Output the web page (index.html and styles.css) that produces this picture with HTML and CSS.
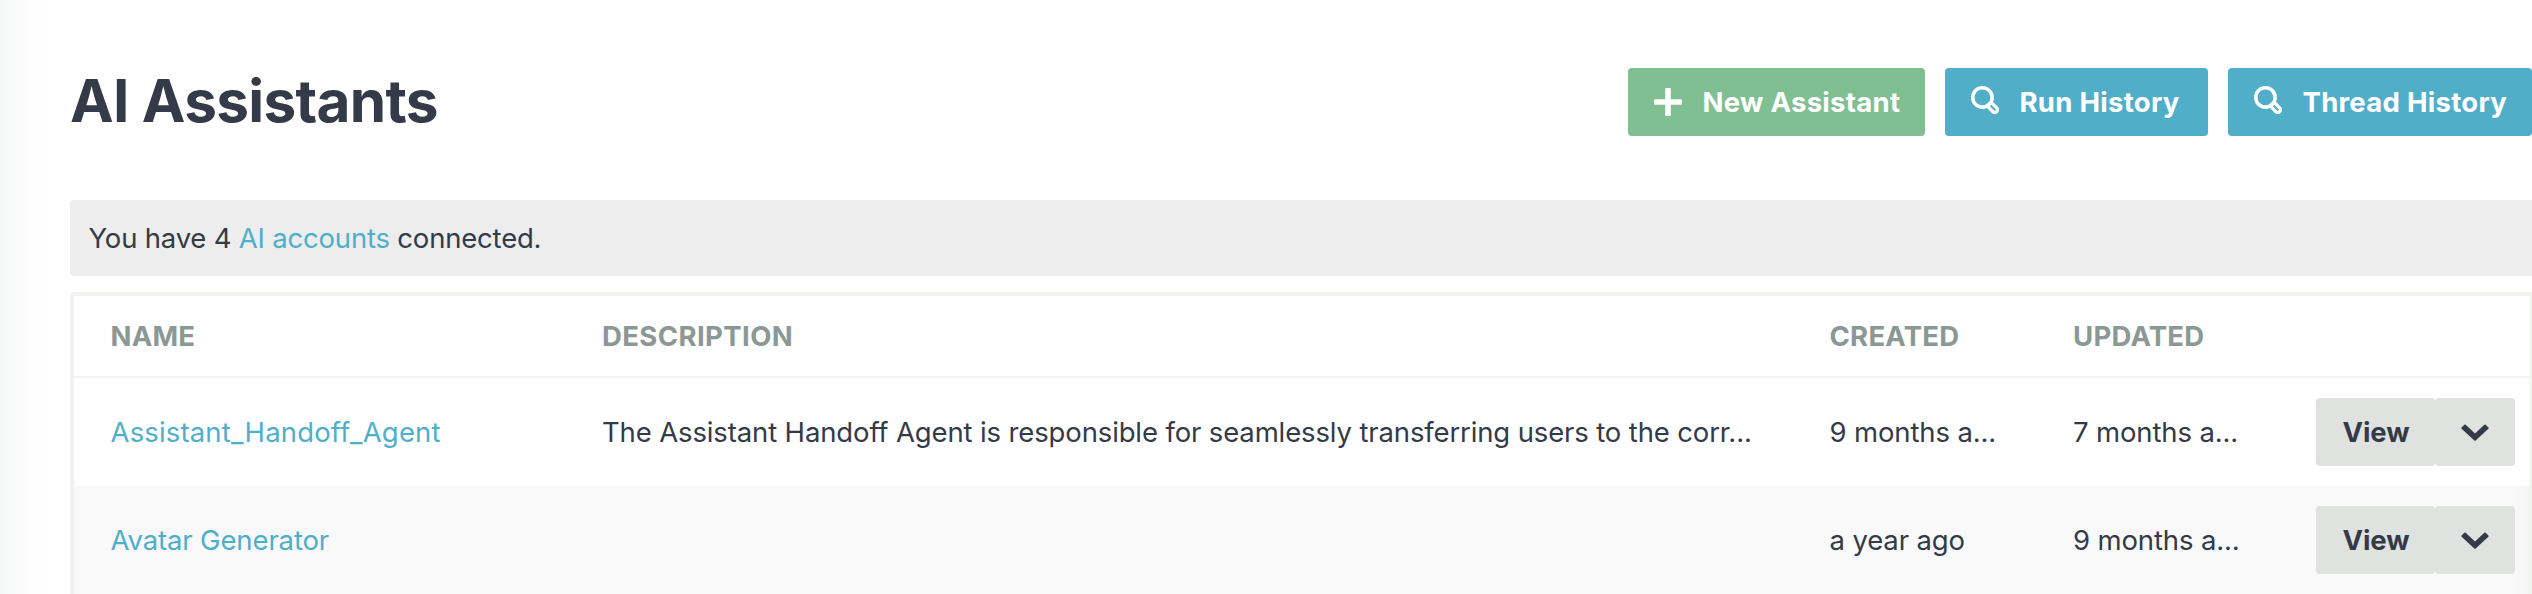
FILE: index.html
```html
<!DOCTYPE html>
<html lang="en">
<head>
<meta charset="utf-8">
<title>AI Assistants</title>
<link rel="stylesheet" href="styles.css">
</head>
<body>
<svg class="sprite" aria-hidden="true">
  <symbol id="plus" viewBox="0 0 28 28"><g fill="currentColor"><rect x="11.2" width="5.6" height="28" rx="1.2"/><rect y="11.2" width="28" height="5.6" rx="1.2"/></g></symbol>
  <symbol id="search" viewBox="0 0 28 28"><g fill="none" stroke="currentColor"><circle cx="11.4" cy="11.4" r="9.7" stroke-width="3.6"/><rect x="25.5" y="-2.7" width="10.7" height="5.4" rx="2.5" transform="rotate(45)" stroke-width="3.3"/></g></symbol>
  <symbol id="chevron" viewBox="0 0 28 17"><path d="M0.6 3.5L3.3 0.7Q4 0.1 4.7 0.7L14 9.5L23.3 0.7Q24 0.1 24.7 0.7L27.4 3.5Q28 4.1 27.4 4.8L14.7 16.6Q14 17.1 13.3 16.6L0.6 4.8Q0 4.1 0.6 3.5Z" fill="currentColor"/></symbol>
</svg>
<main class="page">
  <header class="page-header">
    <h1 class="title"><span>AI Assistants</span></h1>
    <div class="actions">
      <button class="btn btn-green"><svg class="icon icon-plus"><use href="#plus"/></svg><span>New Assistant</span></button>
      <button class="btn btn-blue btn-run"><svg class="icon"><use href="#search"/></svg><span>Run History</span></button>
      <button class="btn btn-blue btn-thread"><svg class="icon"><use href="#search"/></svg><span>Thread History</span></button>
    </div>
  </header>
  <div class="notice"><span>You have 4 <a class="link">AI accounts</a> connected.</span></div>
  <section class="table">
    <div class="row head">
      <span>NAME</span><span class="wide">DESCRIPTION</span><span>CREATED</span><span>UPDATED</span>
    </div>
    <div class="row">
      <a class="link spaced">Assistant_Handoff_Agent</a>
      <span>The Assistant Handoff Agent is responsible for seamlessly transferring users to the corr...</span>
      <span>9 months a...</span><span>7 months a...</span>
      <div class="split"><button class="view">View</button><button class="more" aria-label="More"><svg class="chevron"><use href="#chevron"/></svg></button></div>
    </div>
    <div class="row alt">
      <a class="link">Avatar Generator</a>
      <span></span>
      <span>a year ago</span><span>9 months a...</span>
      <div class="split"><button class="view">View</button><button class="more" aria-label="More"><svg class="chevron"><use href="#chevron"/></svg></button></div>
    </div>
  </section>
</main>
</body>
</html>
```
FILE: styles.css
```css
* { box-sizing: border-box; }
body {
  margin: 0;
  width: 2532px;
  height: 594px;
  overflow: hidden;
  background: linear-gradient(to right, #f6f8f7 0, #fafcfb 16px, #fdfefd 34px, #fff 60px);
  color: #343a47;
  font: 400 27.5px/34px Inter, "Liberation Sans", sans-serif;
  letter-spacing: -0.135px;
  white-space: nowrap;
}
.sprite { display: none; }
.page { padding: 68px 0 0 70px; width: 2534px; }
.page-header { display: flex; justify-content: space-between; height: 132px; padding-right: 2px; }
.title { margin: 0; font-size: 58.5px; line-height: 66px; font-weight: 700; letter-spacing: -0.7px; }
.actions { display: flex; gap: 20px; }
.btn, .view, .more {
  display: flex; align-items: center; height: 68px; margin: 0; border: 0; border-radius: 4px;
  color: #fff; font: 700 27.5px/34px Inter, "Liberation Sans", sans-serif; letter-spacing: 0.28px;
}
.btn { width: 297px; padding: 0 0 0 26px; gap: 20.5px; }
.btn-green { background: #7fbf92; }
.btn-blue { background: #51aec9; }
.btn-run { width: 263px; }
.btn-thread { width: 304px; }
.icon { width: 28px; height: 28px; flex: none; margin-bottom: 4px; }
.icon-plus { margin-bottom: 0; }
.notice { height: 76px; padding: 21px 18.5px; background: #ededed; border-radius: 4px 0 0 4px; letter-spacing: -0.2px; }
.link { color: #4fafc9; }
.spaced { letter-spacing: 0.16px; }
.table { margin-top: 16px; height: 320px; border: 4px solid #f1f3f0; border-radius: 4px; background: #fff; }
.row {
  display: grid; grid-template-columns: 491.5px 1227.5px 243.5px 243px 199px;
  align-items: center; height: 108px; padding-left: 36.5px;
}
.head { height: 82px; border-bottom: 2px solid #f2f3f3; color: #8b9894; font-weight: 700; letter-spacing: 0.25px; }
.wide { letter-spacing: 0.4px; }
.alt { background: linear-gradient(to right, #f9f9f9 calc(100% - 16px), #f3f4f3); }
.split { display: flex; }
.view, .more { background: #e0e2df; color: #343a47; }
.view { width: 119px; padding: 0 0 0 26.5px; letter-spacing: -0.1px; }
.more { width: 80px; padding: 0 0 0 26px; }
.chevron { width: 28px; height: 17px; }
```
